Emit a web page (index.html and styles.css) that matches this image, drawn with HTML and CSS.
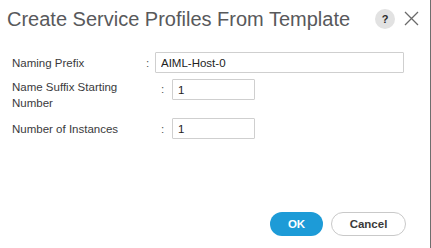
FILE: index.html
```html
<!DOCTYPE html>
<html lang="en">
<head>
    <meta charset="UTF-8">
    <meta name="viewport" content="width=device-width, initial-scale=1">
    <title>Create Service Profiles From Template</title>
    <link rel="stylesheet" href="styles.css">
</head>
<body>
    <div class="dialog">
        <!-- Заголовок диалога -->
        <div class="dialog-header">
            <h1>Create Service Profiles From Template</h1>
            <span class="help-icon">?</span>
            <span class="close-icon">
                <svg width="15" height="15" viewBox="0 0 15 15">
                    <path d="M1 1 L14 14 M14 1 L1 14" stroke="#6a6a6a" stroke-width="1.3" fill="none"/>
                </svg>
            </span>
        </div>

        <!-- Поля формы -->
        <form class="dialog-form">
            <div class="form-row row-prefix">
                <label for="namingPrefix" class="label-short">Naming Prefix</label>
                <span class="colon">:</span>
                <input type="text" id="namingPrefix" class="input-wide" value="AIML-Host-0">
            </div>
            <div class="form-row row-suffix">
                <label for="suffixStart" class="label-long">Name Suffix Starting Number</label>
                <span class="colon">:</span>
                <input type="text" id="suffixStart" class="input-small" value="1">
            </div>
            <div class="form-row row-count">
                <label for="instances" class="label-long">Number of Instances</label>
                <span class="colon">:</span>
                <input type="text" id="instances" class="input-small" value="1">
            </div>
        </form>

        <!-- Кнопки -->
        <div class="dialog-footer">
            <button type="button" class="btn-ok">OK</button>
            <button type="button" class="btn-cancel">Cancel</button>
        </div>
    </div>
</body>
</html>
```
FILE: styles.css
```css
body {
    font-family: "Liberation Sans", Arial, sans-serif;
    background-color: #fff;
    margin: 0;
    padding: 0;
}

.dialog {
    width: 430px;
    height: 248px;
    border-right: 1px solid #6e6e6e;
}
/* Заголовок */
.dialog-header {
    display: flex;
    align-items: center;
    height: 36px;
    padding: 0 0 0 7px;
}

h1 {
    margin: 0;
    font-size: 20px;
    font-weight: normal;
    color: #58595b;
    flex: 1;
    padding-top: 2px;
}

.help-icon {
    width: 20px;
    height: 20px;
    border-radius: 50%;
    background-color: #e2e2e2;
    color: #2b2b2b;
    font-size: 11px;
    font-weight: bold;
    display: flex;
    align-items: center;
    justify-content: center;
    margin-right: 9px;
    margin-top: 1px;
}

.close-icon {
    width: 15px;
    height: 15px;
    margin-right: 11px;
}

    .close-icon svg {
        display: block;
    }
/* Форма */
.dialog-form {
    padding: 16px 0 0 12px;
    margin: 0;
}

.form-row {
    display: flex;
    align-items: center;
    font-size: 11.5px;
    color: #3a3a3c;
}
/* Двухстрочная подпись: поле на уровне первой строки */
.row-suffix {
    margin-top: 6px;
    align-items: flex-start;
}

    .row-suffix .colon {
        line-height: 21px;
    }

.row-count {
    margin-top: 7px;
}

label {
    line-height: 16px;
}

.row-suffix label {
    padding-top: 0;
}

.label-short {
    width: 134px;
}

.label-long {
    width: 149px;
}

.colon {
    color: #555;
    width: 4px;
    margin-right: 7px;
}

.row-prefix .colon {
    margin-right: 5px;
}

input {
    height: 21px;
    box-sizing: border-box;
    border: 1px solid #cfcfcf;
    padding: 0 5px;
    font-family: "Liberation Sans", Arial, sans-serif;
    font-size: 11.5px;
    color: #222;
    border-radius: 1px;
}

.input-wide {
    width: 249px;
}

.input-small {
    width: 83px;
}
/* Кнопки */
.dialog-footer {
    display: flex;
    justify-content: flex-end;
    gap: 8px;
    padding: 73px 24px 0 0;
}

button {
    height: 24px;
    border-radius: 12px;
    font-family: "Liberation Sans", Arial, sans-serif;
    font-size: 11.5px;
    font-weight: bold;
    cursor: pointer;
}

.btn-ok {
    width: 53px;
    background-color: #1d9bd7;
    color: #fff;
    border: none;
}

.btn-cancel {
    width: 75px;
    background-color: #fff;
    color: #3a3a3a;
    border: 1px solid #c9c9c9;
}
```
